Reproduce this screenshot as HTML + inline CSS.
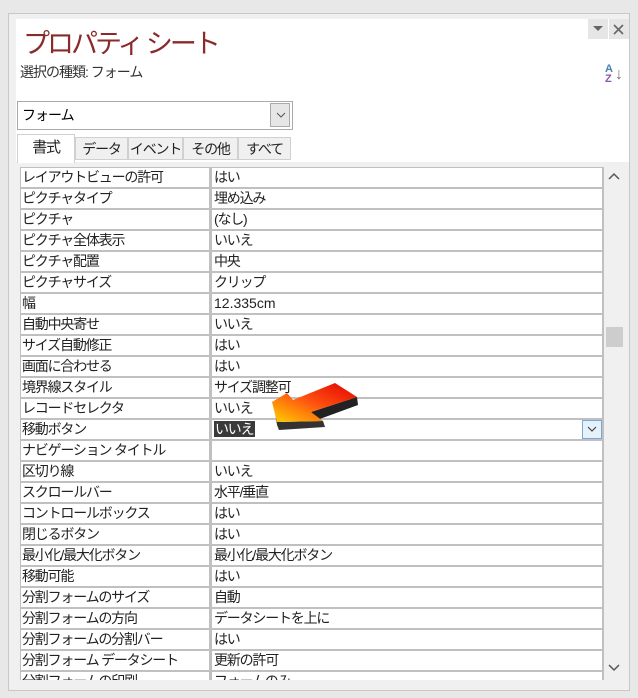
<!DOCTYPE html>
<html><head><meta charset="utf-8"><style>
body{margin:0;width:638px;height:698px;background:#e8e8e8;position:relative;overflow:hidden;font-family:"Liberation Sans","Noto Sans CJK JP",sans-serif;}
.frame{position:absolute;left:8px;top:13px;width:622px;height:678px;background:#f0f0f0;border:1px solid #c8c8c8;box-sizing:border-box;}
.white{position:absolute;left:16px;top:19px;width:613px;height:143px;background:#fff;}
.a{position:absolute;}
.grid{position:absolute;left:20px;top:167px;width:584px;height:513px;background:#c0c0c0;overflow:hidden;}
.r{position:absolute;left:0;width:584px;height:21px;}
.l,.v{position:absolute;top:1px;height:19px;background:#fff;font-size:14px;letter-spacing:-1.2px;line-height:19px;color:#222;white-space:nowrap;overflow:hidden;}
.l{left:1px;width:188px;padding-left:1px;box-sizing:border-box;}
.v{left:192px;width:390px;padding-left:2px;box-sizing:border-box;}
.tab{position:absolute;top:137px;height:23px;background:#f0f0f0;border:1px solid #d0d0d0;box-sizing:border-box;font-size:14px;letter-spacing:-1.2px;line-height:22px;text-align:center;color:#222;white-space:nowrap;}
</style></head><body>
<div class="frame"></div>
<div class="white"></div>
<div class="a" style="left:588px;top:19px;width:20px;height:20px;background:#e6e6e6"></div>
<div class="a" style="left:609px;top:19px;width:20px;height:20px;background:#e6e6e6"></div>
<svg class="a" style="left:588px;top:19px" width="42" height="22"><path d="M5 7 L15 7 L10 12 Z" fill="#666"/><path d="M26 6 L35 15 M35 6 L26 15" stroke="#666" stroke-width="1.6"/></svg>
<div class="a" style="left:23px;top:22px;font-size:27px;color:#8b2a2a;letter-spacing:-3px">プロパティ シート</div>
<div class="a" style="left:20px;top:62px;font-size:14px;letter-spacing:-1px;color:#333">選択の種類: フォーム</div>
<div class="a" style="left:605px;top:64px;font-size:11px;line-height:10px;font-weight:bold"><span style="color:#4a7fb5">A</span><br><span style="color:#8a5aa0">Z</span></div>
<div class="a" style="left:615px;top:66px;font-size:16px;color:#777">↓</div>
<div class="a" style="left:17px;top:101px;width:276px;height:29px;border:1px solid #aaa;box-sizing:border-box;background:#fff;font-size:14px;letter-spacing:-1px;line-height:27px;padding-left:4px">フォーム</div>
<div class="a" style="left:270px;top:103px;width:20px;height:24px;background:#e6e6e6;border:1px solid #aaa;box-sizing:border-box"></div>
<svg class="a" style="left:276px;top:112px" width="10" height="6"><path d="M1 1 L5 5 L9 1" stroke="#555" fill="none"/></svg>
<div class="tab" style="left:75px;width:53px">データ</div>
<div class="tab" style="left:128px;width:55px">イベント</div>
<div class="tab" style="left:183px;width:55px">その他</div>
<div class="tab" style="left:238px;width:53px">すべて</div>
<div class="tab" style="left:17px;top:134px;width:58px;height:29px;background:#fff;border-bottom:none;line-height:26px;font-size:15px">書式</div>
<div class="grid">
<div class="r" style="top:0"><div class="l">レイアウトビューの許可</div><div class="v">はい</div></div>
<div class="r" style="top:21px"><div class="l">ピクチャタイプ</div><div class="v">埋め込み</div></div>
<div class="r" style="top:42px"><div class="l">ピクチャ</div><div class="v">(なし)</div></div>
<div class="r" style="top:63px"><div class="l">ピクチャ全体表示</div><div class="v">いいえ</div></div>
<div class="r" style="top:84px"><div class="l">ピクチャ配置</div><div class="v">中央</div></div>
<div class="r" style="top:105px"><div class="l">ピクチャサイズ</div><div class="v">クリップ</div></div>
<div class="r" style="top:126px"><div class="l">幅</div><div class="v" style="letter-spacing:0">12.335cm</div></div>
<div class="r" style="top:147px"><div class="l">自動中央寄せ</div><div class="v">いいえ</div></div>
<div class="r" style="top:168px"><div class="l">サイズ自動修正</div><div class="v">はい</div></div>
<div class="r" style="top:189px"><div class="l">画面に合わせる</div><div class="v">はい</div></div>
<div class="r" style="top:210px"><div class="l">境界線スタイル</div><div class="v">サイズ調整可</div></div>
<div class="r" style="top:231px"><div class="l">レコードセレクタ</div><div class="v">いいえ</div></div>
<div class="r" style="top:252px"><div class="l">移動ボタン</div><div class="v"><span style="background:#3a3a3a;color:#fff;padding:0 2px 0 1px">いいえ</span></div></div>
<div class="r" style="top:273px"><div class="l">ナビゲーション タイトル</div><div class="v"></div></div>
<div class="r" style="top:294px"><div class="l">区切り線</div><div class="v">いいえ</div></div>
<div class="r" style="top:315px"><div class="l">スクロールバー</div><div class="v">水平/垂直</div></div>
<div class="r" style="top:336px"><div class="l">コントロールボックス</div><div class="v">はい</div></div>
<div class="r" style="top:357px"><div class="l">閉じるボタン</div><div class="v">はい</div></div>
<div class="r" style="top:378px"><div class="l">最小化/最大化ボタン</div><div class="v">最小化/最大化ボタン</div></div>
<div class="r" style="top:399px"><div class="l">移動可能</div><div class="v">はい</div></div>
<div class="r" style="top:420px"><div class="l">分割フォームのサイズ</div><div class="v">自動</div></div>
<div class="r" style="top:441px"><div class="l">分割フォームの方向</div><div class="v">データシートを上に</div></div>
<div class="r" style="top:462px"><div class="l">分割フォームの分割バー</div><div class="v">はい</div></div>
<div class="r" style="top:483px"><div class="l">分割フォーム データシート</div><div class="v">更新の許可</div></div>
<div class="r" style="top:504px"><div class="l">分割フォームの印刷</div><div class="v">フォームのみ</div></div>
</div>
<div class="a" style="left:582px;top:420px;width:20px;height:19px;background:#e5f1fb;border:1px solid #7aa7d6;box-sizing:border-box"></div>
<svg class="a" style="left:587px;top:426px" width="10" height="6"><path d="M1 1 L5 5 L9 1" stroke="#333" fill="none"/></svg>
<div class="a" style="left:604px;top:167px;width:21px;height:513px;background:#f0f0f0"></div>
<svg class="a" style="left:608px;top:172px" width="12" height="8"><path d="M1 7 L6 2 L11 7" stroke="#555" stroke-width="1.5" fill="none"/></svg>
<svg class="a" style="left:608px;top:664px" width="12" height="8"><path d="M1 1 L6 6 L11 1" stroke="#555" stroke-width="1.5" fill="none"/></svg>
<div class="a" style="left:606px;top:327px;width:17px;height:20px;background:#cdcdcd"></div>
<svg class="a" style="left:265px;top:380px" width="100" height="60">
<defs><linearGradient id="g" x1="1" y1="0" x2="0" y2="1"><stop offset="0" stop-color="#e00000"/><stop offset="0.5" stop-color="#ff5010"/><stop offset="1" stop-color="#ffd000"/></linearGradient></defs>
<path d="M9 26 L12 45 L14 50 L60 47 L58 41 L16 42 Z" fill="#333"/>
<path d="M46 32 L92 17 L93 25 L52 40 Z" fill="#222"/>
<path d="M7 22 L12 42 L58 41 L46 32 L92 17 L70 3 L28 20 L22 13 Z" fill="url(#g)"/>
</svg>
</body></html>
